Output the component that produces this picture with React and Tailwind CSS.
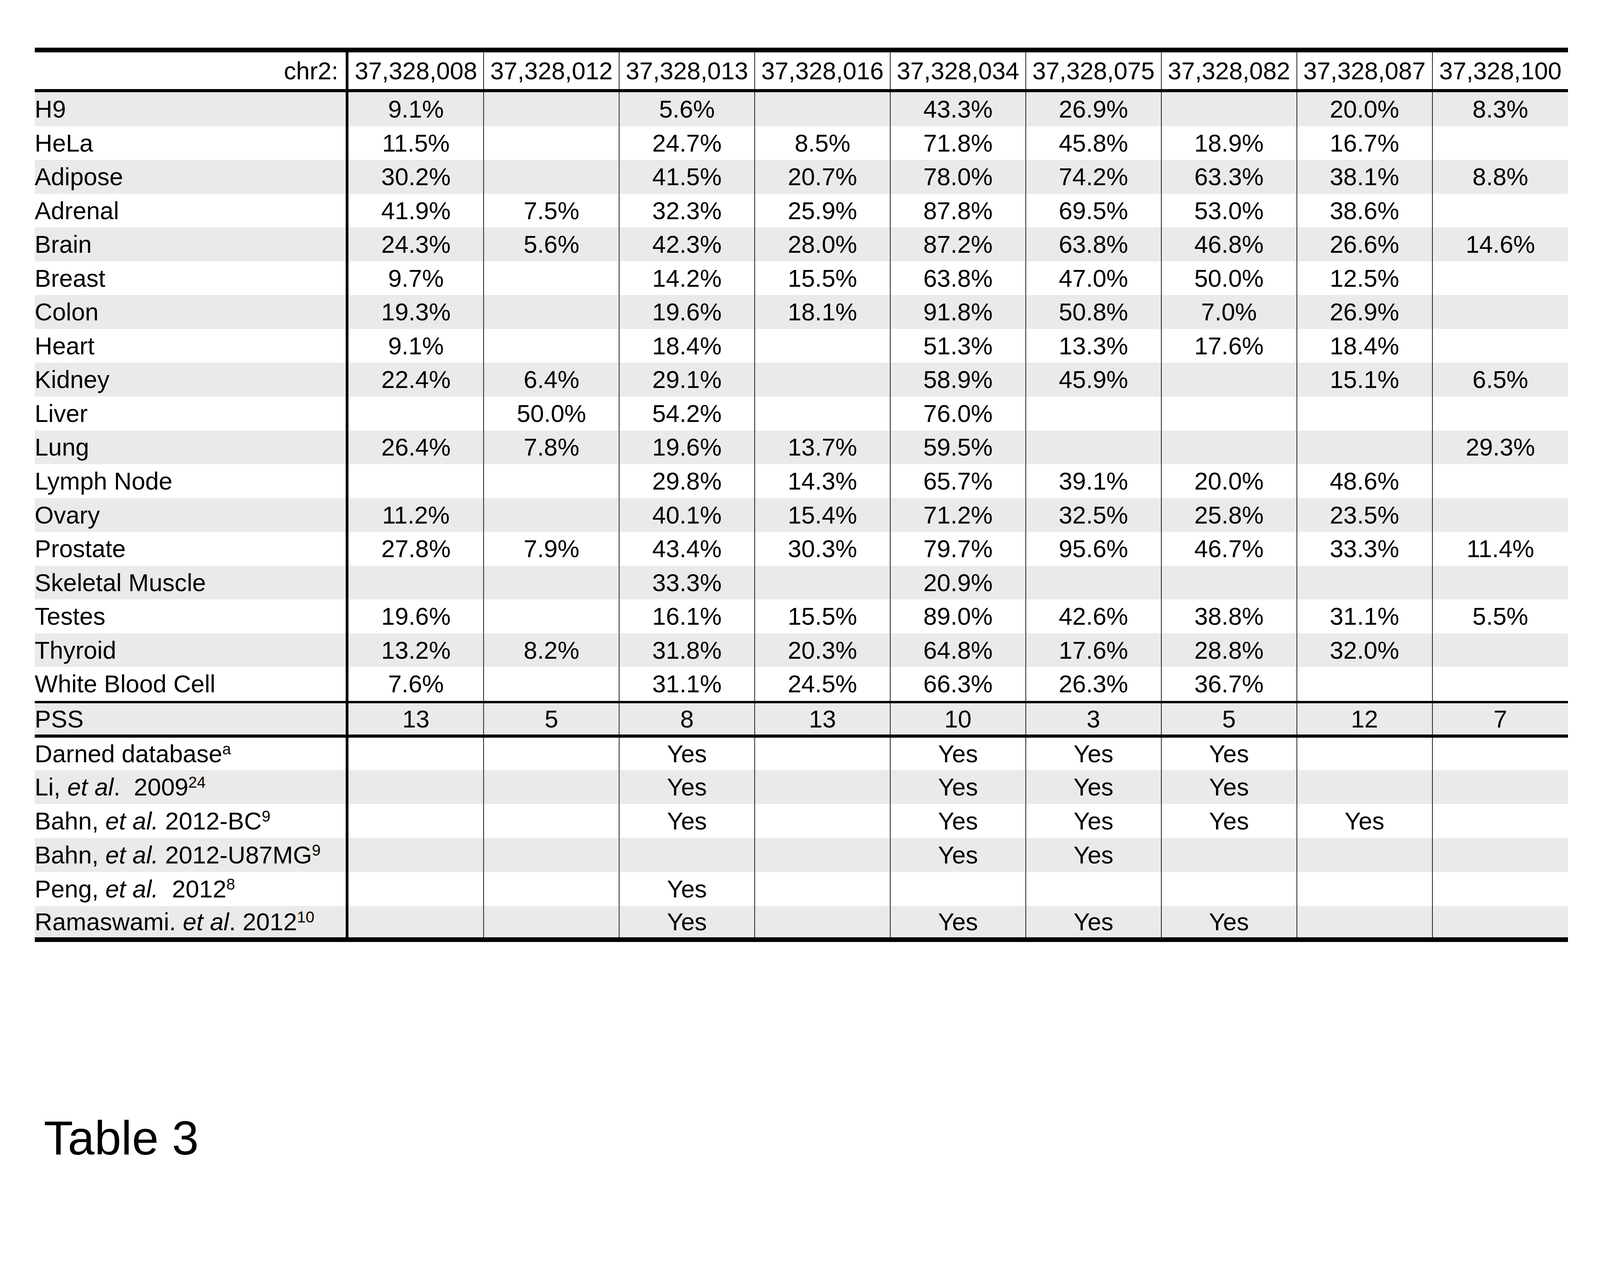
import React from "react";

const positions = [
  "37,328,008",
  "37,328,012",
  "37,328,013",
  "37,328,016",
  "37,328,034",
  "37,328,075",
  "37,328,082",
  "37,328,087",
  "37,328,100",
];

// tissue / cell line editing levels
const tissues = [
  ["H9", ["9.1%", "", "5.6%", "", "43.3%", "26.9%", "", "20.0%", "8.3%"]],
  ["HeLa", ["11.5%", "", "24.7%", "8.5%", "71.8%", "45.8%", "18.9%", "16.7%", ""]],
  ["Adipose", ["30.2%", "", "41.5%", "20.7%", "78.0%", "74.2%", "63.3%", "38.1%", "8.8%"]],
  ["Adrenal", ["41.9%", "7.5%", "32.3%", "25.9%", "87.8%", "69.5%", "53.0%", "38.6%", ""]],
  ["Brain", ["24.3%", "5.6%", "42.3%", "28.0%", "87.2%", "63.8%", "46.8%", "26.6%", "14.6%"]],
  ["Breast", ["9.7%", "", "14.2%", "15.5%", "63.8%", "47.0%", "50.0%", "12.5%", ""]],
  ["Colon", ["19.3%", "", "19.6%", "18.1%", "91.8%", "50.8%", "7.0%", "26.9%", ""]],
  ["Heart", ["9.1%", "", "18.4%", "", "51.3%", "13.3%", "17.6%", "18.4%", ""]],
  ["Kidney", ["22.4%", "6.4%", "29.1%", "", "58.9%", "45.9%", "", "15.1%", "6.5%"]],
  ["Liver", ["", "50.0%", "54.2%", "", "76.0%", "", "", "", ""]],
  ["Lung", ["26.4%", "7.8%", "19.6%", "13.7%", "59.5%", "", "", "", "29.3%"]],
  ["Lymph Node", ["", "", "29.8%", "14.3%", "65.7%", "39.1%", "20.0%", "48.6%", ""]],
  ["Ovary", ["11.2%", "", "40.1%", "15.4%", "71.2%", "32.5%", "25.8%", "23.5%", ""]],
  ["Prostate", ["27.8%", "7.9%", "43.4%", "30.3%", "79.7%", "95.6%", "46.7%", "33.3%", "11.4%"]],
  ["Skeletal Muscle", ["", "", "33.3%", "", "20.9%", "", "", "", ""]],
  ["Testes", ["19.6%", "", "16.1%", "15.5%", "89.0%", "42.6%", "38.8%", "31.1%", "5.5%"]],
  ["Thyroid", ["13.2%", "8.2%", "31.8%", "20.3%", "64.8%", "17.6%", "28.8%", "32.0%", ""]],
  ["White Blood Cell", ["7.6%", "", "31.1%", "24.5%", "66.3%", "26.3%", "36.7%", "", ""]],
];

const pss = ["13", "5", "8", "13", "10", "3", "5", "12", "7"];

const Sup = ({ children }) => <sup className="text-[0.64em]">{children}</sup>;

const sources = [
  {
    label: (
      <>
        Darned database<Sup>a</Sup>
      </>
    ),
    cells: ["", "", "Yes", "", "Yes", "Yes", "Yes", "", ""],
    h: "h-[83.2px]",
  },
  {
    label: (
      <>
        Li, <i>et al</i>.{"  2009"}
        <Sup>24</Sup>
      </>
    ),
    cells: ["", "", "Yes", "", "Yes", "Yes", "Yes", "", ""],
    h: "h-[86.9px]",
  },
  {
    label: (
      <>
        Bahn, <i>et al.</i> 2012-BC<Sup>9</Sup>
      </>
    ),
    cells: ["", "", "Yes", "", "Yes", "Yes", "Yes", "Yes", ""],
    h: "h-[86.9px]",
  },
  {
    label: (
      <>
        Bahn, <i>et al.</i> 2012-U87MG<Sup>9</Sup>
      </>
    ),
    cells: ["", "", "", "", "Yes", "Yes", "", "", ""],
    h: "h-[86.9px]",
  },
  {
    label: (
      <>
        Peng, <i>et al.</i>
        {"  2012"}
        <Sup>8</Sup>
      </>
    ),
    cells: ["", "", "Yes", "", "", "", "", "", ""],
    h: "h-[86.9px]",
  },
  {
    label: (
      <>
        Ramaswami. <i>et al</i>. 2012<Sup>10</Sup>
      </>
    ),
    cells: ["", "", "Yes", "", "Yes", "Yes", "Yes", "", ""],
    h: "h-[80.4px]",
  },
];

function Row({ label, cells, gray, className = "", labelClass = "" }) {
  return (
    <div
      className={`grid grid-cols-[803.6px_repeat(9,minmax(0,1fr))] ${
        gray ? "bg-[#eaeaea]" : "bg-white"
      } ${className}`}
    >
      <div className={`flex items-center border-r-[7.5px] border-black ${labelClass}`}>
        <span className="whitespace-pre">{label}</span>
      </div>
      {cells.map((c, i) => (
        <div
          key={i}
          className="flex items-center justify-center border-r-2 border-[#222] last:border-r-0"
        >
          {c}
        </div>
      ))}
    </div>
  );
}

export default function App() {
  return (
    <div className="w-[4097px] h-[3056px] overflow-hidden bg-white text-black font-['Liberation_Sans',Arial,sans-serif] text-[62.6px] leading-none">
      <div className="pt-[122.4px] pl-[88.8px]">
        <div className="w-[3925.6px] border-t-[12.1px] border-b-[12.1px] border-black">
          <Row
            label="chr2:"
            cells={positions}
            labelClass="justify-end pr-[19.6px]"
            className="h-[101.8px] border-b-[8.4px] border-black"
          />
          {tissues.map(([name, cells], i) => (
            <Row
              key={name}
              label={name}
              cells={cells}
              gray={i % 2 === 0}
              className="h-[86.54px]"
            />
          ))}
          <Row
            label="PSS"
            cells={pss}
            gray
            className="h-[94.3px] border-t-[6.5px] border-b-[8.4px] border-black"
          />
          {sources.map((s, i) => (
            <Row
              key={i}
              label={s.label}
              cells={s.cells}
              gray={i % 2 === 1}
              className={s.h}
            />
          ))}
        </div>
      </div>
      <div className="mt-[440px] pl-[112px] text-[123px] leading-none">
        Table 3
      </div>
    </div>
  );
}
